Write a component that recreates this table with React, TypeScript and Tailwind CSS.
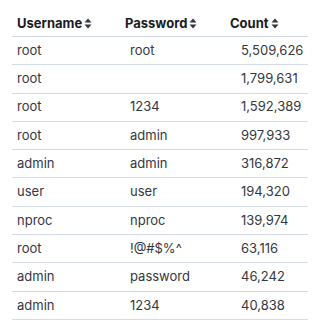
const rows = [
  { user: "root", pass: "root", count: "5,509,626" },
  { user: "root", pass: "", count: "1,799,631" },
  { user: "root", pass: "1234", count: "1,592,389" },
  { user: "root", pass: "admin", count: "997,933" },
  { user: "admin", pass: "admin", count: "316,872" },
  { user: "user", pass: "user", count: "194,320" },
  { user: "nproc", pass: "nproc", count: "139,974" },
  { user: "root", pass: "!@#$%^", count: "63,116" },
  { user: "admin", pass: "password", count: "46,242" },
  { user: "admin", pass: "1234", count: "40,838" },
];

function SortIcon() {
  return (
    <svg width="8" height="11" viewBox="0 0 8 11" className="ml-[2px]">
      <path d="M4 0.5 L7.5 4.5 H0.5 Z" fill="#343741" />
      <path d="M4 10.5 L7.5 6.5 H0.5 Z" fill="#343741" />
    </svg>
  );
}

function HeaderCell({ label, width }: { label: string; width: string }) {
  return (
    <div className={`${width} flex items-center pl-[5px]`}>
      <span className="font-bold text-[#1a1c21]">{label}</span>
      <SortIcon />
    </div>
  );
}

export default function App() {
  return (
    <div
      className="w-[322px] h-[335px] bg-white px-3 text-[13px] text-[#343741]"
      style={{ fontFamily: "Inter, 'Noto Sans', sans-serif" }}
    >
      <div className="w-[296px]">
        <div className="flex h-[37px] items-end pb-[3px] border-b border-[#d3dae6]">
          <HeaderCell label="Username" width="w-[108px]" />
          <HeaderCell label="Password" width="w-[105px]" />
          <HeaderCell label="Count" width="w-[83px]" />
        </div>
        {rows.map((r, i) => (
          <div
            key={i}
            className="flex h-[28.3px] items-center border-b border-[#d3dae6]"
          >
            <div className="w-[108px] pl-[5px]">{r.user}</div>
            <div className="w-[105px] pl-[10px]">{r.pass}</div>
            <div className="w-[83px] pl-[16px]">{r.count}</div>
          </div>
        ))}
      </div>
    </div>
  );
}
